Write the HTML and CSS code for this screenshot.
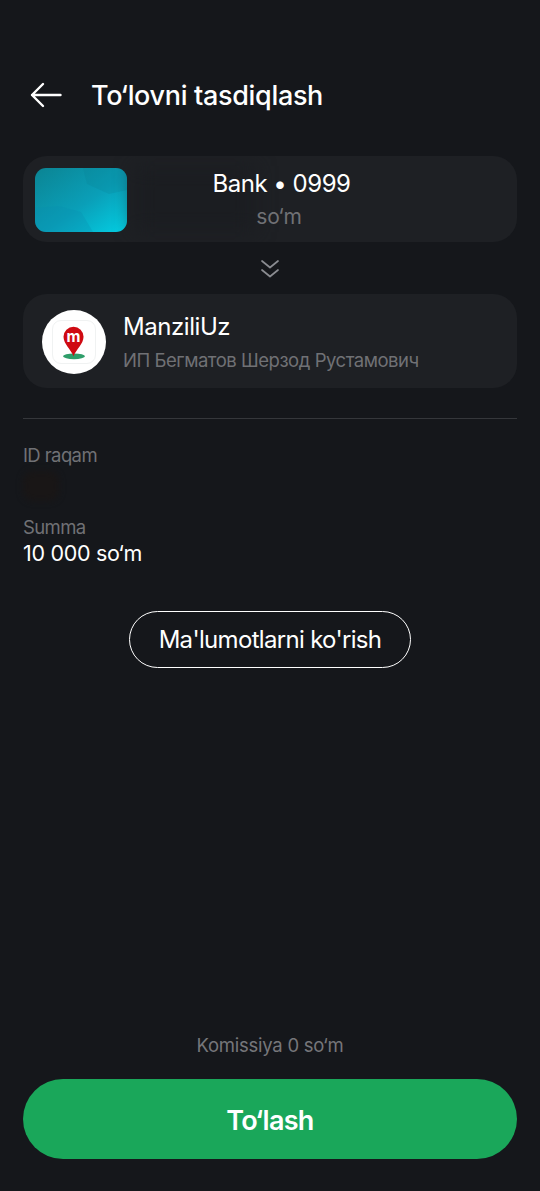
FILE: index.html
```html
<!DOCTYPE html>
<html lang="uz">
<head>
<meta charset="utf-8">
<title>To'lovni tasdiqlash</title>
<link rel="stylesheet" href="styles.css">
</head>
<body>
<main class="screen">
  <header class="header">
    <svg class="back" viewBox="0 0 32 26" fill="none" stroke="#fff" stroke-width="2.400" stroke-linecap="round" stroke-linejoin="round"><path d="M30.500 13H2M13 2 2 13l11 11"/></svg>
    <h1 class="title">To‘lovni tasdiqlash</h1>
  </header>

  <section class="card card-from">
    <div class="bank-card">
      <svg class="bank-art" viewBox="0 0 92 64" preserveAspectRatio="none"><defs><linearGradient id="g" x1="0" y1="0" x2="1" y2="1"><stop offset="0" stop-color="#0b8493"/><stop offset=".55" stop-color="#0a9fb8"/><stop offset="1" stop-color="#03cfe4"/></linearGradient></defs><path d="M0 0h92v64H0z" fill="url(#g)"/><path d="M0 40l24-2 22 6 12 20H0z" fill="#0b8fb0" opacity=".3"/><path d="M48 0l4 16 22 10 18-4V0z" fill="#0a7f90" opacity=".22"/></svg>
    </div>
    <div class="smear"></div>
    <div class="from-text">
      <div class="from-name">Bank • 0999</div>
      <div class="from-sub">so‘m</div>
    </div>
  </section>

  <div class="chevrons">
    <svg viewBox="0 0 20 20" fill="none" stroke="#8a8c91" stroke-width="1.700" stroke-linecap="round" stroke-linejoin="round"><path d="M2 2l8 6.500L18 2M2 11l8 6.500 8-6.500"/></svg>
  </div>

  <section class="card card-to">
    <div class="logo">
      <div class="logo-tile">
        <svg viewBox="0 0 44 44"><ellipse cx="22" cy="37" rx="11.500" ry="3" fill="#2f9e6a"/><path d="M21.500 37C19 30 11 24 11 16.500a10.500 10.500 0 0 1 21 0C32 24 24 30 21.500 37z" fill="#cf0a12"/><text x="21.500" y="21.500" class="logo-m">m</text></svg>
      </div>
    </div>
    <div class="to-text">
      <div class="to-name">ManziliUz</div>
      <div class="to-sub">ИП Бегматов Шерзод Рустамович</div>
    </div>
  </section>

  <hr class="divider">

  <div class="detail detail-id">
    <div class="label">ID raqam</div>
    <div class="hidden-value"></div>
  </div>
  <div class="detail">
    <div class="label">Summa</div>
    <div class="value">10 000 so‘m</div>
  </div>

  <div class="more-wrap"><button class="more">Ma'lumotlarni ko'rish</button></div>

  <div class="foot">
    <div class="fee">Komissiya 0 so‘m</div>
    <button class="pay">To‘lash</button>
  </div>
</main>
</body>
</html>
```
FILE: styles.css
```css
* { box-sizing: border-box; }
html, body { margin: 0; padding: 0; }
body {
  width: 540px;
  height: 1191px;
  background: #15171b;
  color: #fff;
  font-family: Inter, "Noto Sans", sans-serif;
  overflow: hidden;
}
.screen {
  height: 1191px;
  padding: 0 23px 32px;
  display: flex;
  flex-direction: column;
}
.header {
  display: flex;
  align-items: center;
  height: 38px;
  margin-top: 76px;
  padding-left: 7px;
}
.back { width: 32px; height: 26px; flex: none; }
.title {
  margin: 1px 0 0 29px;
  font-size: 27px;
  font-weight: 500;
  letter-spacing: -0.33px;
  line-height: 38px;
}
.card {
  background: #1e2024;
  border-radius: 24px;
  display: flex;
  align-items: center;
}
.card-from {
  position: relative;
  height: 86px;
  margin-top: 42px;
  padding: 2px 11px 0 12px;
  overflow: hidden;
}
.bank-card {
  width: 92px;
  height: 64px;
  border-radius: 11px;
  overflow: hidden;
  flex: none;
}
.bank-art { display: block; width: 100%; height: 100%; }
.smear {
  position: absolute;
  left: 112px;
  top: 10px;
  width: 120px;
  height: 66px;
  background: #1b1d21;
  filter: blur(10px);
}
.from-text {
  position: relative;
  flex: 1;
  text-align: center;
  padding-right: 70px;
}
.from-name { font-size: 24px; letter-spacing: -0.5px; line-height: 32px; }
.from-sub { font-size: 21px; letter-spacing: -0.2px; line-height: 30px; color: #707175; margin-top: 2px; padding-right: 5px; }
.chevrons {
  height: 52px;
  padding-top: 2px;
  display: flex;
  align-items: center;
  justify-content: center;
}
.chevrons svg { width: 20px; height: 20px; }
.card-to {
  height: 94px;
  padding: 2px 19px 0;
}
.logo {
  width: 64px;
  height: 64px;
  border-radius: 50%;
  background: #fff;
  flex: none;
  display: flex;
  align-items: center;
  justify-content: center;
}
.logo-tile {
  width: 44px;
  height: 44px;
  border: 1px solid #f0f2f2;
  border-radius: 9px;
}
.logo-tile svg { display: block; width: 100%; height: 100%; }
.logo-m {
  font-family: Inter, sans-serif;
  font-size: 16px;
  font-weight: 700;
  fill: #fff;
  text-anchor: middle;
}
.to-text { margin-left: 17px; }
.to-name { font-size: 24px; letter-spacing: -0.45px; line-height: 32px; margin-top: 1px; }
.to-sub { font-size: 18.5px; letter-spacing: -0.47px; line-height: 28px; color: #707175; margin-top: 3px; }
.divider {
  width: 100%;
  height: 1px;
  margin: 30px 0 0;
  border: 0;
  background: #35373b;
}
.detail { display: flex; flex-direction: column; }
.detail-id { margin-top: 23px; }
.label { font-size: 18.5px; letter-spacing: -0.6px; line-height: 26px; color: #707175; }
.hidden-value {
  width: 36px;
  height: 30px;
  background: #191616;
  border-radius: 10px;
  filter: blur(3px);
  margin-top: 3px;
  margin-bottom: 13px;
}
.value { font-size: 21.5px; letter-spacing: -0.3px; line-height: 28px; margin-top: -1px; }
.more-wrap {
  display: flex;
  justify-content: center;
  margin-top: 44px;
}
.more {
  width: 282px;
  height: 57px;
  background: transparent;
  border: 1.75px solid #fff;
  border-radius: 29px;
  color: #fff;
  font: 400 24px Inter, sans-serif;
  letter-spacing: -0.68px;
  padding: 0;
}
.foot {
  margin-top: auto;
  display: flex;
  flex-direction: column;
  align-items: center;
}
.fee { font-size: 18.5px; letter-spacing: -0.25px; line-height: 26px; color: #75767a; margin-top: -1px; }
.pay {
  width: 100%;
  height: 80px;
  margin-top: 21px;
  border: 0;
  border-radius: 40px;
  background: #1aa75a;
  color: #fff;
  font: 600 27px Inter, sans-serif;
  letter-spacing: -0.7px;
  padding: 3px 0 0;
}
```
